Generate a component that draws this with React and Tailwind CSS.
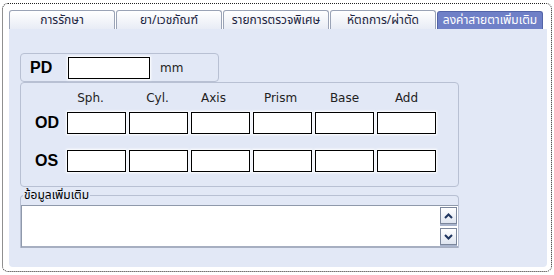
import React from 'react';

const tabs = ['การรักษา', 'ยา/เวชภัณฑ์', 'รายการตรวจพิเศษ', 'หัตถการ/ผ่าตัด', 'ลงค่าสายตาเพิ่มเติม'];
const cols = [
  { label: 'Sph.', cls: 'pr-[12px]' },
  { label: 'Cyl.', cls: 'pr-[2px]' },
  { label: 'Axis', cls: 'pr-[14px]' },
  { label: 'Prism', cls: 'pr-[4px]' },
  { label: 'Base', cls: '' },
  { label: 'Add', cls: '' },
];

const Box = () => (
  <div className="w-[59px] h-[22px] border border-black bg-white shadow-[0_0_2px_1px_#ffffff]" />
);

const ScrollBtn = ({ up }) => (
  <div className="w-[17px] h-[17px] border border-[#7c879c] bg-gradient-to-b from-white to-[#dfe5f0] shadow-[0_2px_0_#a9b4cc] flex items-center justify-center">
    <svg width="9" height="6" viewBox="0 0 9 6">
      <path
        d={up ? 'M1 5 L4.5 1.5 L8 5' : 'M1 1 L4.5 4.5 L8 1'}
        fill="none"
        stroke="#1f355f"
        strokeWidth="2"
      />
    </svg>
  </div>
);

export default function App() {
  return (
    <div className="w-[554px] h-[275px] bg-white pt-[3px] pl-[2px] font-['Tahoma','Noto_Sans_Thai','Loma','Garuda',sans-serif]">
      <div className="w-[550px] h-[269px] border border-dotted border-[#222] rounded-[6px] pt-[6px] pl-[6px]">
        {/* tabs */}
        <div className="flex items-end gap-[1px] h-[19px]">
          {tabs.map((t, i) =>
            i === tabs.length - 1 ? (
              <div
                key={t}
                className="w-[106px] h-[18px] border border-b-0 border-[#5364a8] rounded-t-[3px] bg-[#6f80c7] text-white text-[12px] leading-[17px] text-center whitespace-nowrap"
              >
                {t}
              </div>
            ) : (
              <div
                key={t}
                className="w-[106px] h-[19px] border border-b-0 border-[#9aa3b6] rounded-t-[3px] bg-gradient-to-b from-white to-[#e8ecf5] text-[#1c2440] text-[12px] leading-[18px] text-center whitespace-nowrap"
              >
                {t}
              </div>
            )
          )}
        </div>

        {/* panel */}
        <div className="w-[538px] h-[238px] bg-[#e2e8f6] rounded-b-[4px] pl-[11px] pt-[24px] flex flex-col">
          {/* PD */}
          <div className="w-[199px] h-[29px] border border-[#b8c0d3] rounded-[4px] flex items-center">
            <span className="w-[47px] pl-[9px] font-['Liberation_Sans',sans-serif] font-bold text-[16px] text-black">PD</span>
            <div className="w-[82px] h-[22px] border border-black bg-white shadow-[0_0_2px_1px_#ffffff]" />
            <span className="ml-[10px] font-['DejaVu_Sans',sans-serif] text-[12px] text-[#222]">mm</span>
          </div>

          {/* refraction table */}
          <div className="w-[439px] h-[105px] border border-[#b8c0d3] rounded-[4px] flex flex-col">
            <div className="flex mt-[8px] ml-[46px] gap-[3px] font-['DejaVu_Sans',sans-serif] text-[12px] leading-[14px] text-[#222]">
              {cols.map((c) => (
                <div key={c.label} className={`w-[59px] text-center ${c.cls}`}>{c.label}</div>
              ))}
            </div>
            {['OD', 'OS'].map((r, i) => (
              <div key={r} className={`flex items-center ${i === 0 ? 'mt-[6px]' : 'mt-[14px]'}`}>
                <span className="w-[46px] pl-[14px] font-['Liberation_Sans',sans-serif] font-bold text-[16px] text-black">{r}</span>
                <div className="flex gap-[3px]">
                  {cols.map((c) => (
                    <Box key={c.label} />
                  ))}
                </div>
              </div>
            ))}
          </div>

          {/* extra info */}
          <fieldset className="w-[439px] mt-[1px] border border-b-0 border-[#b8c0d3] rounded-t-[4px]">
            <legend className="ml-[2px] px-[1px] text-[12px] leading-[14px] text-black">ข้อมูลเพิ่มเติม</legend>
            <div className="mt-[3px] h-[43px] bg-white border-t border-l border-[#8f99ab] border-b-2 border-b-[#a7afc1] flex justify-end">
              <div className="flex flex-col gap-[4px] pt-[1px] pr-[1px]">
                <ScrollBtn up />
                <ScrollBtn />
              </div>
            </div>
          </fieldset>
        </div>
      </div>
    </div>
  );
}
